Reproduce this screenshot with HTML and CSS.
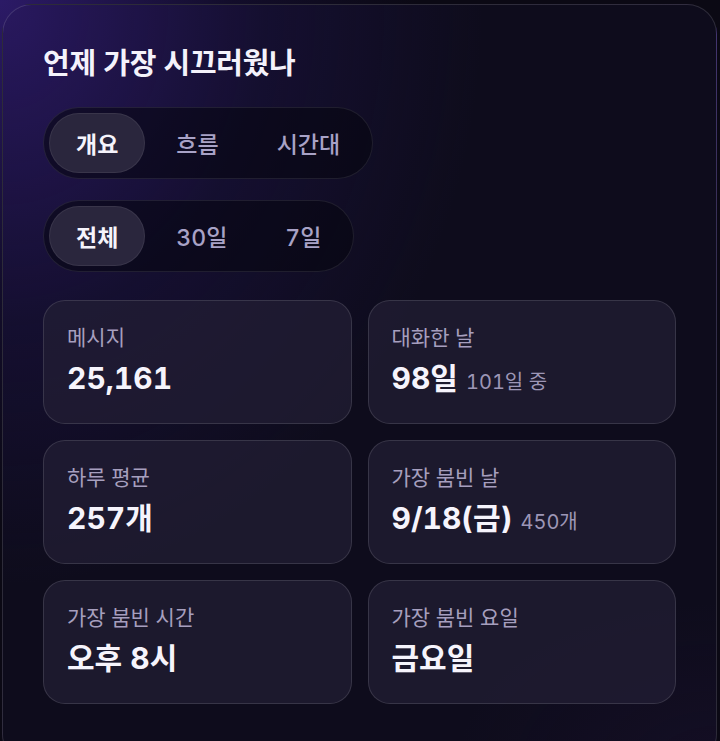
FILE: index.html
```html
<!DOCTYPE html>
<html lang="ko">
<head>
<meta charset="utf-8">
<title>언제 가장 시끄러웠나</title>
<link rel="stylesheet" href="styles.css">
</head>
<body>
<section class="panel">
  <h1 class="title">언제 가장 시끄러웠나</h1>
  <div class="seg seg-first">
    <button class="tab active">개요</button>
    <button class="tab">흐름</button>
    <button class="tab">시간대</button>
  </div>
  <div class="seg seg-second">
    <button class="tab active">전체</button>
    <button class="tab">30일</button>
    <button class="tab">7일</button>
  </div>
  <div class="grid">
    <div class="stat">
      <div class="label">메시지</div>
      <div class="value">25,161</div>
    </div>
    <div class="stat">
      <div class="label">대화한 날</div>
      <div class="value">98일 <span class="sub">101일 중</span></div>
    </div>
    <div class="stat">
      <div class="label">하루 평균</div>
      <div class="value">257개</div>
    </div>
    <div class="stat">
      <div class="label">가장 붐빈 날</div>
      <div class="value">9/18(금) <span class="sub">450개</span></div>
    </div>
    <div class="stat">
      <div class="label">가장 붐빈 시간</div>
      <div class="value">오후 8시</div>
    </div>
    <div class="stat">
      <div class="label">가장 붐빈 요일</div>
      <div class="value">금요일</div>
    </div>
  </div>
</section>
</body>
</html>
```

FILE: styles.css
```css
* {
  box-sizing: border-box;
}

html, body {
  margin: 0;
  padding: 0;
}

body {
  height: 741px;
  overflow: hidden;
  background-color: #0b0914;
  background-image: radial-gradient(ellipse 420px 520px at 0 0, rgba(70, 40, 170, 0.55), rgba(40, 24, 110, 0.25) 55%, rgba(11, 9, 20, 0) 100%);
  font-family: "Inter", "Noto Sans CJK KR", "Noto Sans", sans-serif;
  font-variant-numeric: tabular-nums;
  color: #f3f1fa;
}

.panel {
  margin: 4px 3px 0 2px;
  padding: 42px 40px 40px 40px;
  border: 1px solid rgba(255, 255, 255, 0.13);
  border-radius: 30px;
  background-color: #0e0c1c;
  background-image:
    radial-gradient(ellipse 480px 580px at 0 0, rgba(62, 34, 150, 0.55), rgba(38, 22, 100, 0.27) 55%, rgba(14, 12, 28, 0) 100%),
    radial-gradient(ellipse 260px 160px at 100% 100%, rgba(50, 26, 80, 0.16), rgba(14, 12, 28, 0) 100%);
  min-height: 760px;
}

.title {
  margin: 0;
  font-size: 29px;
  line-height: 34px;
  font-weight: 700;
  letter-spacing: -0.01em;
  color: #f4f2fb;
}

.seg {
  gap: 4px;
  padding: 5px;
  border: 1px solid rgba(255, 255, 255, 0.09);
  border-radius: 999px;
  background: rgba(6, 5, 14, 0.55);
}

.panel > .seg {
  display: flex;
  width: max-content;
}

.seg-first {
  margin-top: 26px;
}

.seg-second {
  margin-top: 21px;
}

.tab {
  height: 60px;
  padding: 0 26px;
  display: flex;
  align-items: center;
  border: 1px solid transparent;
  border-radius: 999px;
  background: transparent;
  font-family: inherit;
  font-variant-numeric: tabular-nums;
  font-size: 23px;
  font-weight: 500;
  color: #a8a2c6;
}

.tab.active {
  background: #2a263d;
  border-color: rgba(255, 255, 255, 0.07);
  color: #f5f3fb;
  font-weight: 700;
}

.grid {
  margin-top: 28px;
  display: grid;
  grid-template-columns: 1fr 1fr;
  gap: 16px;
}

.stat {
  height: 124px;
  padding: 23px 23px 0 23px;
  border: 1px solid rgba(255, 255, 255, 0.12);
  border-radius: 22px;
  background: rgba(34, 30, 52, 0.72);
}

.label {
  font-size: 21px;
  line-height: 28px;
  font-weight: 400;
  color: #a69fbe;
}

.value {
  margin-top: 8px;
  font-size: 30px;
  line-height: 36px;
  font-weight: 700;
  color: #f6f4fc;
  white-space: nowrap;
}

.sub {
  font-size: 20px;
  font-weight: 400;
  color: #9d96b6;
}
```
